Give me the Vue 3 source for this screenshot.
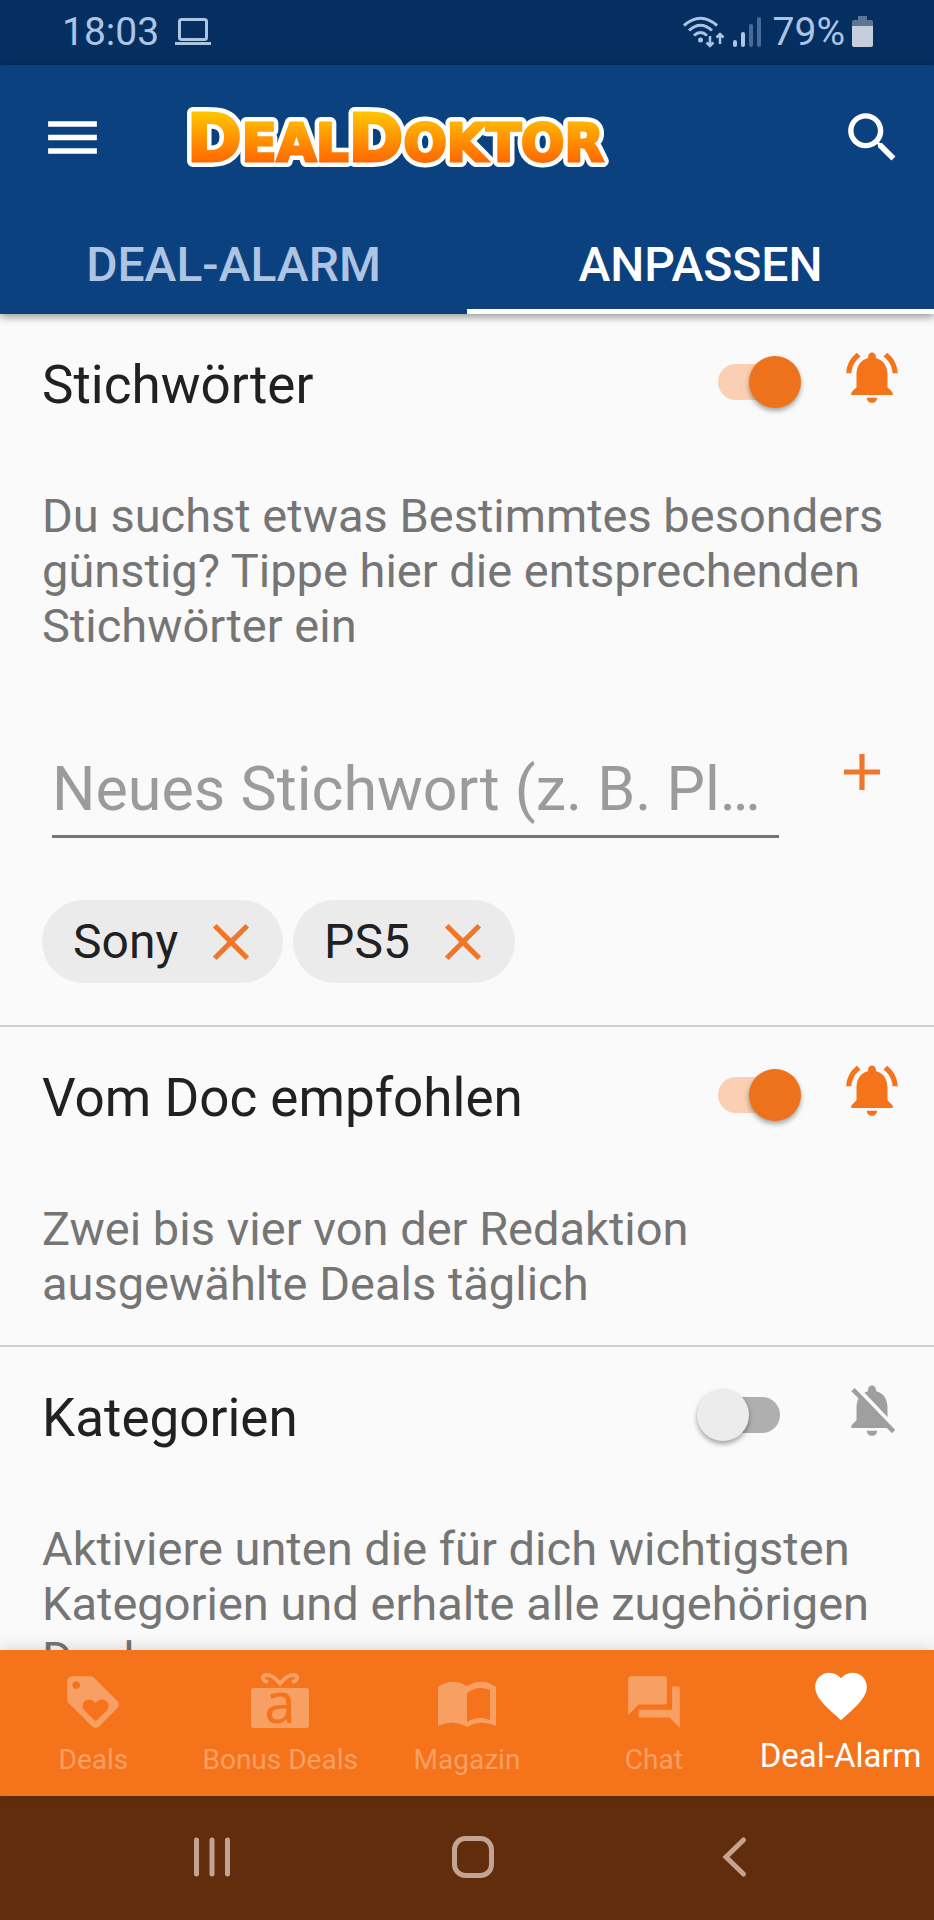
<script setup>
import { ref } from 'vue'

const paths = {
  menu: 'M3 18h18v-2H3v2zm0-5h18v-2H3v2zm0-7v2h18V6H3z',
  search:
    'M15.5 14h-.79l-.28-.27C15.41 12.59 16 11.11 16 9.5 16 5.91 13.09 3 9.5 3S3 5.91 3 9.5 5.91 16 9.5 16c1.61 0 3.09-.59 4.23-1.57l.27.28v.79l5 4.99L20.49 19l-4.99-5zm-6 0C7.01 14 5 11.99 5 9.5S7.01 5 9.5 5 14 7.01 14 9.5 11.99 14 9.5 14z',
  bellOn:
    'M7.58 4.08L6.15 2.65C3.75 4.48 2.17 7.3 2.03 10.5h2c.15-2.65 1.51-4.97 3.55-6.42zm12.39 6.42h2c-.15-3.2-1.73-6.02-4.12-7.85l-1.42 1.43c2.02 1.45 3.39 3.77 3.54 6.42zM18 11c0-3.07-1.64-5.64-4.5-6.32V4c0-.83-.67-1.5-1.5-1.5s-1.5.67-1.5 1.5v.68C7.63 5.36 6 7.92 6 11v5l-2 2v1h16v-1l-2-2v-5zm-6 11c.14 0 .27-.01.4-.04.65-.14 1.18-.58 1.44-1.18.1-.24.15-.5.15-.78h-4c.01 1.1.9 2 2.01 2z',
  bellOff:
    'M20 18.69L7.84 6.14 5.27 3.49 4 4.76l2.8 2.8v.01c-.52.99-.8 2.16-.8 3.42v5l-2 2v1h13.73l2 2L21 19.72l-1-1.03zM12 22c1.11 0 2-.89 2-2h-4c0 1.11.89 2 2 2zm6-7.32V11c0-3.08-1.64-5.64-4.5-6.32V4c0-.83-.67-1.5-1.5-1.5s-1.5.67-1.5 1.5v.68c-.15.03-.29.08-.42.12-.1.03-.2.07-.3.11h-.01c-.01 0-.01 0-.02.01-.23.09-.46.2-.68.31 0 0-.01 0-.01.01L18 14.68z',
  add: 'M19 13h-6v6h-2v-6H5v-2h6V5h2v6h6v2z',
  close:
    'M19 6.41L17.59 5 12 10.59 6.41 5 5 6.41 10.59 12 5 17.59 6.41 19 12 13.41 17.59 19 19 17.59 13.41 12z',
  deals:
    'M21.41 11.58l-9-9C12.05 2.22 11.55 2 11 2H4c-1.1 0-2 .9-2 2v7c0 .55.22 1.05.59 1.42l9 9c.36.36.86.58 1.41.58.55 0 1.05-.22 1.41-.59l7-7c.37-.36.59-.86.59-1.41 0-.55-.23-1.06-.59-1.42zM5.5 7C4.67 7 4 6.33 4 5.5S4.67 4 5.5 4 7 4.67 7 5.5 6.33 7 5.5 7zm11.77 8.27L13 19.54l-4.27-4.27C8.28 14.81 8 14.19 8 13.5c0-1.38 1.12-2.5 2.5-2.5.69 0 1.32.28 1.77.74l.73.72.73-.73c.45-.45 1.08-.73 1.77-.73 1.38 0 2.5 1.12 2.5 2.5 0 .69-.28 1.32-.73 1.77z',
  chat: 'M21 6h-2v9H6v2c0 .55.45 1 1 1h11l4 4V7c0-.55-.45-1-1-1zm-4 6V3c0-.55-.45-1-1-1H3c-.55 0-1 .45-1 1v14l4-4h10c.55 0 1-.45 1-1z',
  alarm:
    'M12 21.35l-1.45-1.32C5.4 15.36 2 12.28 2 8.5 2 5.42 4.42 3 7.5 3c1.74 0 3.41.81 4.5 2.09C13.09 3.81 14.76 3 16.5 3 19.58 3 22 5.42 22 8.5c0 3.78-3.4 6.86-8.55 11.54L12 21.35z',
}

const sections = ref([
  {
    id: 'keywords',
    title: 'Stichwörter',
    text: 'Du suchst etwas Bestimmtes besonders günstig? Tippe hier die entsprechenden Stichwörter ein',
    on: true,
  },
  {
    id: 'doc',
    title: 'Vom Doc empfohlen',
    text: 'Zwei bis vier von der Redaktion ausgewählte Deals täglich',
    on: true,
  },
  {
    id: 'categories',
    title: 'Kategorien',
    text: 'Aktiviere unten die für dich wichtigsten Kategorien und erhalte alle zugehörigen Deals',
    on: false,
  },
])

const keywords = ref(['Sony', 'PS5'])
const draft = ref('')

function addKeyword() {
  const word = draft.value.trim()
  if (word && !keywords.value.includes(word)) keywords.value.push(word)
  draft.value = ''
}
function removeKeyword(word) {
  keywords.value = keywords.value.filter((k) => k !== word)
}

const navItems = [
  { id: 'deals', label: 'Deals' },
  { id: 'bonus', label: 'Bonus Deals' },
  { id: 'magazine', label: 'Magazin' },
  { id: 'chat', label: 'Chat' },
  { id: 'alarm', label: 'Deal-Alarm', active: true },
]
</script>

<template>
  <div class="screen">
    <div class="status">
      <span>18:03</span>
      <svg class="laptop" width="36" height="28" viewBox="0 0 36 28" fill="none" stroke="currentColor">
        <rect x="4.5" y="1.5" width="27" height="20" rx="2" stroke-width="3" />
        <path d="M0 25.5h36" stroke-width="3" />
      </svg>
      <svg class="wifi" width="42" height="32" viewBox="0 0 42 32" fill="none" stroke="currentColor" stroke-width="3">
        <path d="M1 9.500Q17.500-5 34 9.500M6 14.500Q17.500 4 29 14.500M11 19.500Q17.500 13.500 24 19.500" />
        <circle cx="17.500" cy="24" r="2.500" fill="currentColor" stroke="none" />
        <path d="M27 20v10M23.500 26.500l3.500 3.500 3.500-3.500M37 28V18M33.500 21.500L37 18l3.500 3.500" stroke-width="2.500" />
      </svg>
      <svg class="signal" width="28" height="30" viewBox="0 0 28 30" fill="currentColor">
        <rect x="0" y="23" width="4" height="7" rx="2" />
        <rect x="8" y="15" width="4" height="15" rx="2" />
        <rect x="16" y="7" width="4" height="23" rx="2" opacity=".4" />
        <rect x="24" y="0" width="4" height="30" rx="2" opacity=".4" />
      </svg>
      <span>79%</span>
      <svg class="battery" width="21" height="31" viewBox="0 0 21 31" fill="#c6cddc">
        <path d="M6 0h9v4h4a2 2 0 0 1 2 2v5H0V6a2 2 0 0 1 2-2h4z" opacity=".45" />
        <path d="M0 10h21v19a2 2 0 0 1-2 2H2a2 2 0 0 1-2-2z" />
      </svg>
    </div>

    <header class="appbar">
      <div class="toolbar">
        <button class="icon-btn" aria-label="Menü">
          <svg class="icon-lg" viewBox="0 0 24 24"><path :d="paths.menu" /></svg>
        </button>
        <svg class="logo" width="440" height="96" viewBox="0 0 440 96" role="img" aria-label="DealDoktor">
          <defs>
            <linearGradient id="logo-fill" gradientUnits="userSpaceOnUse" x1="0" y1="24" x2="0" y2="72">
              <stop offset="0" stop-color="#ffc400" />
              <stop offset="1" stop-color="#ff6a00" />
            </linearGradient>
          </defs>
          <text class="logo-outline" x="2" y="72"><tspan class="cap">D</tspan>EAL<tspan class="cap">D</tspan>OKTOR</text>
          <text class="logo-face" x="2" y="72"><tspan class="cap">D</tspan>EAL<tspan class="cap">D</tspan>OKTOR</text>
        </svg>
        <button class="icon-btn search" aria-label="Suche">
          <svg class="icon-lg" viewBox="0 0 24 24"><path :d="paths.search" /></svg>
        </button>
      </div>
      <div class="tabs" role="tablist">
        <button class="tab" role="tab" aria-selected="false">DEAL-ALARM</button>
        <button class="tab active" role="tab" aria-selected="true">ANPASSEN</button>
      </div>
    </header>

    <main class="content">
      <section v-for="s in sections" :key="s.id" class="section">
        <div class="section-head">
          <h2 :id="s.id">{{ s.title }}</h2>
          <input v-model="s.on" class="switch" type="checkbox" role="switch" :aria-labelledby="s.id" />
          <button class="icon-btn bell" :class="{ on: s.on }" :aria-label="'Benachrichtigung ' + s.title">
            <svg class="icon" viewBox="0 0 24 24"><path :d="s.on ? paths.bellOn : paths.bellOff" /></svg>
          </button>
        </div>
        <p class="text">{{ s.text }}</p>
        <template v-if="s.id === 'keywords'">
          <form class="entry" @submit.prevent="addKeyword">
            <input
              v-model="draft"
              class="field"
              type="text"
              aria-label="Neues Stichwort"
              placeholder="Neues Stichwort (z. B. Playstation)"
            />
            <button class="icon-btn add" aria-label="Hinzufügen">
              <svg class="icon" viewBox="0 0 24 24"><path :d="paths.add" /></svg>
            </button>
          </form>
          <div class="chips">
            <span v-for="k in keywords" :key="k" class="chip">
              {{ k }}
              <button class="icon-btn" :aria-label="k + ' entfernen'" @click="removeKeyword(k)">
                <svg class="icon" viewBox="0 0 24 24"><path :d="paths.close" /></svg>
              </button>
            </span>
          </div>
        </template>
      </section>
    </main>

    <nav class="bottom">
      <a v-for="n in navItems" :key="n.id" href="#" class="nav-item" :class="{ active: n.active }">
        <svg v-if="n.id === 'bonus'" class="icon" viewBox="0 0 62 62">
          <rect x="2" y="17" width="58" height="40" rx="3" />
          <path
            d="M19 11C11 9 13 2 21 4.500C25 6 28 9 31 12.500C34 9 37 6 41 4.500C49 2 51 9 43 11"
            fill="none"
            stroke="currentColor"
            stroke-width="4"
          />
          <text class="gift-letter" x="31" y="52" text-anchor="middle">a</text>
        </svg>
        <svg v-else-if="n.id === 'magazine'" class="icon" viewBox="0 0 62 62">
          <path
            d="M2 16Q16 6 31 15Q46 6 60 16V55Q45 48 31 56Q17 48 2 55zM31 22V51Q42 44 54 49V19Q42 14 31 22z"
            fill-rule="evenodd"
          />
        </svg>
        <svg v-else class="icon" viewBox="0 0 24 24"><path :d="paths[n.id]" /></svg>
        <span>{{ n.label }}</span>
      </a>
    </nav>

    <div class="system">
      <button class="icon-btn" aria-label="Letzte Apps">
        <svg width="44" height="44" viewBox="0 0 44 44" fill="none" stroke="currentColor" stroke-width="5" stroke-linecap="round">
          <path d="M6.500 5v34M22 5v34M37.500 5v34" />
        </svg>
      </button>
      <button class="icon-btn" aria-label="Startbildschirm">
        <svg width="44" height="44" viewBox="0 0 44 44" fill="none" stroke="currentColor" stroke-width="5">
          <rect x="3.500" y="3.500" width="37" height="37" rx="11" />
        </svg>
      </button>
      <button class="icon-btn" aria-label="Zurück">
        <svg width="44" height="44" viewBox="0 0 44 44" fill="none" stroke="currentColor" stroke-width="5" stroke-linecap="round">
          <path d="M31.500 5L14 22l17.500 17" />
        </svg>
      </button>
    </div>
  </div>
</template>

<style>
body {
  margin: 0;
  background: #fafafa;
}
</style>

<style scoped>
.screen {
  display: flex;
  flex-direction: column;
  height: 100vh;
  overflow: hidden;
  font-family: Roboto, 'Liberation Sans', sans-serif;
  background: #fafafa;
  color: #212121;
}
svg {
  display: block;
  flex: none;
}
.icon-btn {
  display: flex;
  padding: 0;
  border: 0;
  background: none;
  color: inherit;
}
.icon {
  width: 62px;
  height: 62px;
  fill: currentColor;
}
.icon-lg {
  width: 65px;
  height: 65px;
  fill: currentColor;
}

.status {
  flex: none;
  display: flex;
  align-items: center;
  height: 65px;
  padding: 0 61px 2px 62px;
  box-sizing: border-box;
  background: #052f60;
  color: #adc4e3;
  font-size: 39px;
  line-height: 62px;
}
.laptop {
  margin-left: 16px;
}
.wifi {
  margin-left: auto;
}
.signal {
  margin: 0 12px 0 8px;
}
.battery {
  margin-left: 7px;
}

.appbar {
  flex: none;
  position: relative;
  background: #0c4180;
  color: #fff;
  box-shadow: 0 3px 8px rgba(0, 0, 0, 0.4);
}
.toolbar {
  display: flex;
  align-items: center;
  height: 144px;
  padding: 0 29px 0 40px;
}
.logo {
  margin-left: 80px;
}
.search {
  margin-left: auto;
}
.logo text {
  font-family: 'DejaVu Sans', sans-serif;
  font-weight: 700;
  font-size: 51px;
  font-kerning: none;
}
.logo .cap {
  font-size: 66px;
}
.logo .logo-outline {
  fill: #fff;
  stroke: #fff;
  stroke-width: 12px;
  stroke-linejoin: round;
}
.logo .logo-face {
  fill: url(#logo-fill);
  stroke: url(#logo-fill);
  stroke-width: 3px;
}
.tabs {
  display: grid;
  grid-template-columns: 1fr 1fr;
}
.tab {
  height: 105px;
  padding: 12px 0 0;
  border: 0;
  border-bottom: 5px solid transparent;
  background: none;
  color: #adc4e3;
  font: 500 48px/1 Roboto, sans-serif;
}
.tab.active {
  color: #fff;
  border-bottom-color: #fff;
}

.content {
  flex: 1;
  min-height: 0;
  overflow: hidden;
}
.section {
  padding: 32px 31px 34px 42px;
  border-bottom: 2px solid #cfcfcf;
}
.section-head {
  display: flex;
  align-items: flex-start;
}
h2 {
  flex: 1;
  margin: 0;
  font-size: 53px;
  font-weight: 400;
  line-height: 78px;
}
.switch {
  appearance: none;
  position: relative;
  width: 104px;
  height: 52px;
  margin: 10px 40px 0 0;
}
.switch::before {
  content: '';
  position: absolute;
  inset: 8px 21px;
  border-radius: 18px;
  background: #afafaf;
}
.switch::after {
  content: '';
  position: absolute;
  left: 0;
  top: 0;
  width: 52px;
  height: 52px;
  border-radius: 50%;
  background: #ececec;
  box-shadow: 0 3px 5px rgba(0, 0, 0, 0.35);
}
.switch:checked::before {
  background: #facfb3;
}
.switch:checked::after {
  left: auto;
  right: 0;
  background: #ee711b;
}
.bell {
  color: #9f9f9f;
}
.bell.on {
  color: #f5731b;
}
.text {
  margin: 64px 0 0;
  color: #757575;
  font-size: 47px;
  line-height: 55px;
}
.entry {
  display: flex;
  align-items: flex-start;
  margin-top: 71px;
  padding-left: 10px;
}
.field {
  flex: 1;
  min-width: 0;
  height: 114px;
  margin-right: 52px;
  padding: 18px 18px 0 0;
  border: 0;
  border-bottom: 3px solid #757575;
  outline: 0;
  background: none;
  color: #212121;
  font: 400 61px/80px Roboto, sans-serif;
  box-sizing: border-box;
  text-overflow: ellipsis;
}
.field::placeholder {
  color: #9b9b9b;
  opacity: 1;
}
.add {
  margin: 17px 10px 0 0;
  color: #f0762a;
}
.chips {
  display: flex;
  flex-wrap: wrap;
  gap: 10px;
  margin: 62px 0 8px;
}
.chip {
  display: flex;
  align-items: center;
  gap: 22px;
  height: 83px;
  padding: 0 21px 0 31px;
  border-radius: 42px;
  background: #ebebeb;
  font-size: 48px;
}
.chip .icon-btn {
  color: #f0762a;
}

.bottom {
  flex: none;
  position: relative;
  display: grid;
  grid-template-columns: repeat(5, 1fr);
  height: 146px;
  background: #f5731b;
  box-shadow: 0 -2px 16px rgba(0, 0, 0, 0.14);
}
.nav-item {
  display: flex;
  flex-direction: column;
  align-items: center;
  gap: 10px;
  padding-top: 21px;
  color: #f8a064;
  font-size: 28px;
  line-height: 34px;
  text-decoration: none;
  white-space: nowrap;
}
.nav-item.active {
  gap: 12px;
  padding-top: 15px;
  color: #fff;
  font-size: 33px;
}
.gift-letter {
  fill: #f5731b;
  font: 400 56px 'Noto Sans', sans-serif;
}

.system {
  flex: none;
  display: grid;
  grid-template-columns: repeat(3, 1fr);
  justify-items: center;
  align-items: center;
  height: 124px;
  padding: 0 70px 3px 81px;
  box-sizing: border-box;
  background: #622d0c;
  color: #c3a392;
}
</style>
